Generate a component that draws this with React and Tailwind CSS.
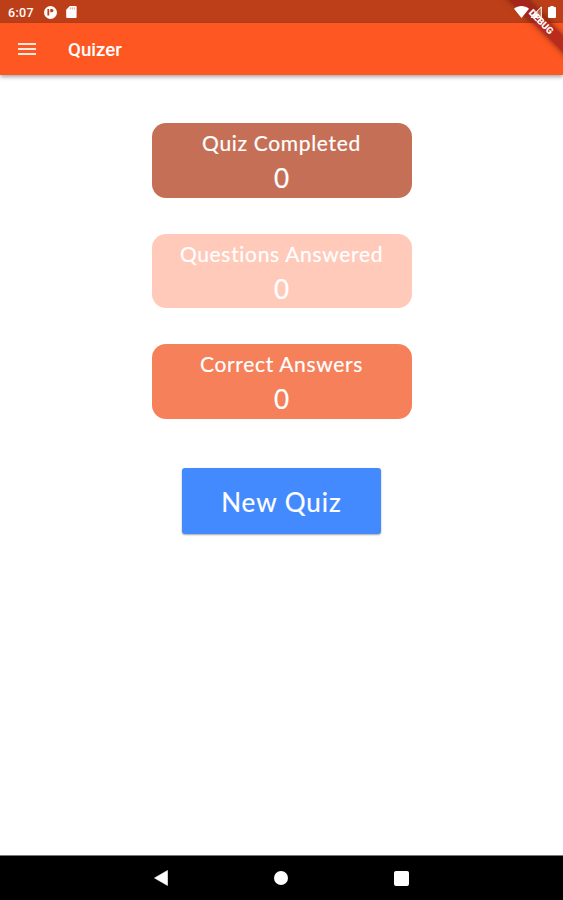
import React from 'react';

const stats = [
  { title: "Quiz Completed", value: 0, color: "bg-[#c57056]" },
  { title: "Questions Answered", value: 0, color: "bg-[#ffcab9]" },
  { title: "Correct Answers", value: 0, color: "bg-[#f5805a]" },
];

const StatusBar = () => (
  <div className="h-[23px] bg-[#bd3f19] flex items-center pl-2 pr-[7px] text-white">
    <span className="text-[12.5px] leading-none font-medium pt-[3px] w-[36px] tracking-[0.3px]">6:07</span>
    <svg className="w-[13px] h-[13px] mt-px" viewBox="0 0 13 13">
      <circle cx="6.5" cy="6.5" r="6.5" fill="#fff" />
      <path d="M4.3 3v6.5" stroke="#bd3f19" strokeWidth="1.8" />
      <path d="M6.3 3h1.6a1.6 1.6 0 0 1 0 3.200H6.3z" fill="#bd3f19" />
    </svg>
    <svg className="w-[11px] h-[12px] ml-[9px] mt-px" viewBox="0 0 11 12">
      <path d="M3.8 0H9.6a1 1 0 0 1 1 1v10a1 1 0 0 1-1 1H1.2a1 1 0 0 1-1-1V3.7z" fill="#fff" />
      <path d="M4.3 1.4v2M6.3 1.4v2M8.3 1.4v2" stroke="#e08a70" strokeWidth=".8" />
    </svg>
    <div className="relative z-20 ml-auto flex items-center">
      <svg className="w-[15px] h-[12px]" viewBox="0 0 15 12">
        <path d="M7.500 12 0 2.800C4.300-.9 10.700-.9 15 2.800z" fill="#fff" />
      </svg>
      <svg className="w-[12px] h-[12px] ml-px" viewBox="0 0 12 12">
        <path d="M11.300 1v10.400H.9z" fill="#fff" fillOpacity=".25" stroke="#fff" strokeWidth="1" />
        <path d="M7.500 5v6.500H1z" fill="#fff" fillOpacity=".8" />
      </svg>
      <svg className="w-[8px] h-[12px] ml-[6px]" viewBox="0 0 8 12">
        <path d="M2.300 0h3.400v1H7a1 1 0 0 1 1 1V11a1 1 0 0 1-1 1H1a1 1 0 0 1-1-1V2a1 1 0 0 1 1-1h1.300z" fill="#fff" />
      </svg>
    </div>
  </div>
);

const DebugBanner = () => (
  <div className="absolute top-0 right-0 z-10 w-[64px] h-[64px] overflow-hidden pointer-events-none">
    <div className="absolute left-[-8.500px] top-[16px] w-[100px] h-[12px] rotate-45 bg-[#a01c1c]/75 shadow-[0_0_6px_rgba(0,0,0,0.5)] flex items-center justify-center text-white text-[9.500px] leading-none font-black">
      DEBUG
    </div>
  </div>
);

const AppBar = () => (
  <header className="h-[52px] bg-[#ff5722] flex items-center pl-[18px] text-white shadow-[0_2px_4px_rgba(0,0,0,0.35)]">
    <svg className="w-[18px] h-[12px]" viewBox="0 0 18 12">
      <path d="M0 1h18M0 6h18M0 11h18" stroke="#ffe8e0" strokeWidth="1.8" />
    </svg>
    <h1 className="ml-8 pt-[2px] text-[18.700px] leading-none font-medium">Quizer</h1>
  </header>
);

const App = () => {
  return (
    <div className="relative w-full h-[900px] bg-white flex flex-col overflow-hidden font-['Roboto',sans-serif]">
      <StatusBar />
      <AppBar />
      <DebugBanner />

      {/* Stats */}
      <main className="flex-1 flex flex-col items-center pt-[48px] text-white font-['Lato',sans-serif] [-webkit-text-stroke:0.2px_white]">
        <div className="flex flex-col gap-[36px]">
          {stats.map((stat) => (
            <div key={stat.title} className={`${stat.color} w-[260px] h-[74.600px] rounded-[14px] flex flex-col items-center pt-[5px] whitespace-nowrap`}>
              <span className="text-[21px] leading-[30px] tracking-[0.680px]">{stat.title}</span>
              <span className="text-[26px] leading-[40px]">{stat.value}</span>
            </div>
          ))}
        </div>
        <button className="mt-[49.500px] w-[199px] h-[66px] pt-[2px] rounded-[3px] bg-[#448aff] shadow-[0_1px_2px_rgba(0,0,0,0.35)] text-[26px] tracking-[1px]">
          New Quiz
        </button>
      </main>

      {/* System navigation */}
      <nav className="h-[45px] bg-black border-t border-[#777] flex items-center justify-center">
        <svg className="w-[14px] h-[16px]" viewBox="0 0 14 16">
          <path d="M13.500.5v15L.5 8z" fill="#fff" stroke="#fff" strokeWidth=".6" strokeLinejoin="round" />
        </svg>
        <div className="mx-[106px] w-[14px] h-[14px] rounded-full bg-white" />
        <div className="w-[15px] h-[15px] rounded-[2px] bg-white" />
      </nav>
    </div>
  );
};

export default App;
